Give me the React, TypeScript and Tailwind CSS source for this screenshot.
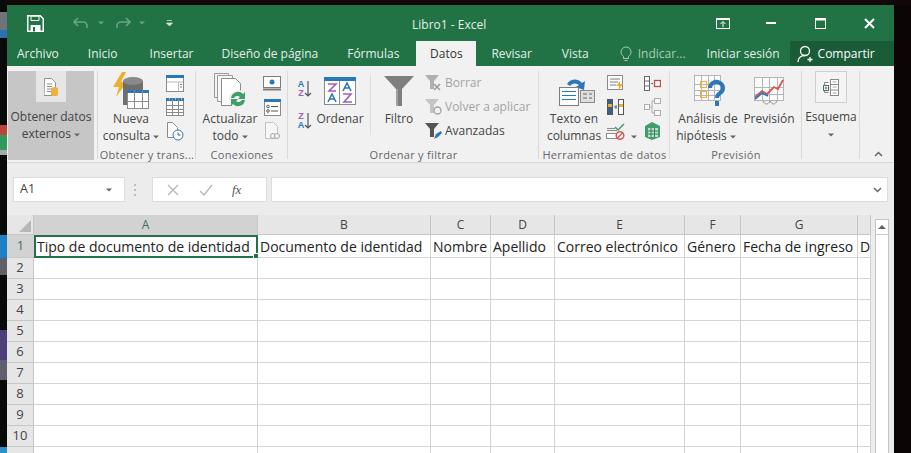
import type { ReactNode } from 'react'

// Excel "Datos" ribbon above an almost empty sheet

const Caret = ({ className = 'fill-[#666]' }: { className?: string }) => (
  <svg width="6" height="4" viewBox="0 0 6 4" className={`inline-block ${className}`}>
    <path d="M0 0.5h6L3 3.5z" />
  </svg>
)

// small table glyph used by many of the ribbon icons
const Tbl = ({ x, y, w, h, cols, rows, head = '#2b78b8', line = '#8a8a8a', fill = '#fff' }: {
  x: number; y: number; w: number; h: number; cols: number; rows: number; head?: string; line?: string; fill?: string
}) => (
  <g>
    <rect x={x + 0.5} y={y + 0.5} width={w - 1} height={h - 1} fill={fill} stroke={line} />
    {head !== 'none' && <rect x={x} y={y} width={w} height={3} fill={head} />}
    {Array.from({ length: cols - 1 }, (_, i) => {
      const cx = Math.round(x + ((i + 1) * w) / cols) + 0.5
      return <line key={i} x1={cx} x2={cx} y1={y} y2={y + h} stroke={line} />
    })}
    {Array.from({ length: rows - 1 }, (_, i) => {
      const cy = Math.round(y + 3 + ((i + 1) * (h - 3)) / rows) + 0.5
      return <line key={i} x1={x} x2={x + w} y1={cy} y2={cy} stroke={line} />
    })}
  </g>
)

const Doc = ({ x, y, w, h, stroke = '#8a8a8a' }: { x: number; y: number; w: number; h: number; stroke?: string }) => (
  <path
    d={`M${x + 0.5} ${y + 0.5}h${w - 6}l5 5v${h - 6}h-${w - 1}z`}
    fill="#fff"
    stroke={stroke}
  />
)

const ExternalIcon = () => (
  <svg width="14" height="18" viewBox="0 0 14 18">
    <path d="M0.5 0.5h7l4 4v13h-11.5z" fill="#fff" stroke="#8f8f8f" />
    <path d="M3 6h5M3 8.5h5M3 11h4M3 13.5h4" stroke="#8f8f8f" />
    <ellipse cx="10.5" cy="10.5" rx="3.5" ry="1.5" fill="#eeb23c" />
    <rect x="7" y="10.5" width="7" height="6" fill="#eeb23c" />
    <ellipse cx="10.5" cy="16.5" rx="3.5" ry="1.5" fill="#eeb23c" />
  </svg>
)

const QueryIcon = () => (
  <svg width="36" height="38" viewBox="0 0 36 38">
    <path d="M9 0L0 15h6L3 25l11-15H8l5-10z" fill="#eeb02f" />
    <path d="M10 9h20v24H10z" fill="#6f6f6f" />
    <ellipse cx="20" cy="9" rx="10" ry="4" fill="#8a8a8a" />
    <Tbl x={14} y={18} w={22} h={19} cols={3} rows={2} head="#2b78b8" />
  </svg>
)

const ConnTop = () => (
  <svg width="18" height="17" viewBox="0 0 18 17">
    <rect x="0.5" y="0.5" width="17" height="16" fill="#fff" stroke="#8a8a8a" />
    <rect x="0" y="0" width="18" height="3" fill="#2b78b8" />
    <path d="M1 7h16" stroke="#b9b9b9" />
    <path d="M12.5 7v9" stroke="#b9b9b9" />
    <path d="M14 9.5h2M14 12h2" stroke="#777" />
  </svg>
)

const ConnTable = () => (
  <svg width="18" height="18" viewBox="0 0 18 18">
    <Tbl x={0} y={0} w={18} h={18} cols={3} rows={4} head="#2b78b8" />
    <path d="M3 1h1M9 1h1M15 1h1" stroke="#fff" />
  </svg>
)

const RecentIcon = () => (
  <svg width="18" height="19" viewBox="0 0 18 19">
    <Doc x={1} y={0} w={11} h={16} />
    <circle cx="12" cy="13" r="5" fill="#fff" stroke="#2b78b8" />
    <path d="M12 10.5V13h2.5" fill="none" stroke="#555" />
  </svg>
)

const RefreshIcon = () => (
  <svg width="34" height="36" viewBox="0 0 34 36">
    <path d="M0.5 0.5h14v24h-14z" fill="#f4f4f4" stroke="#9a9a9a" />
    <path d="M3.5 2.5h15v26h-15z" fill="#f7f7f7" stroke="#9a9a9a" />
    <Doc x={7} y={5} w={20} h={28} stroke="#8a8a8a" />
    <circle cx="24" cy="26" r="9" fill="#f1f1f1" />
    <path d="M17 25a7 7 0 0 1 12-4l2-2v7h-7l2-2a4 4 0 0 0-6 1z" fill="#3f9d6e" />
    <path d="M31 27a7 7 0 0 1-12 4l-2 2v-7h7l-2 2a4 4 0 0 0 6-1z" fill="#3f9d6e" />
  </svg>
)

const MonitorIcon = () => (
  <svg width="18" height="15" viewBox="0 0 18 15">
    <rect x="0.5" y="0.5" width="17" height="11" fill="#fff" stroke="#7d7d7d" />
    <path d="M0 13.5h18" stroke="#7d7d7d" strokeWidth="2" />
    <circle cx="9" cy="6" r="2.5" fill="#2b78b8" />
  </svg>
)

const PropsIcon = () => (
  <svg width="17" height="17" viewBox="0 0 17 17">
    <rect x="0.5" y="0.5" width="16" height="16" fill="#fff" stroke="#8a8a8a" />
    <rect x="0" y="0" width="17" height="3" fill="#2b78b8" />
    <circle cx="4" cy="7.5" r="1.3" fill="none" stroke="#555" />
    <circle cx="4" cy="12" r="1.3" fill="none" stroke="#555" />
    <path d="M7 7.5h7M7 12h7" stroke="#555" />
  </svg>
)

const LinkDocIcon = () => (
  <svg width="15" height="18" viewBox="0 0 15 18">
    <path d="M0.5 0.5h8l4 4v12h-12z" fill="#f7f7f7" stroke="#c2c2c2" />
    <circle cx="8" cy="14" r="2.5" fill="#f1f1f1" stroke="#a9a9a9" />
    <circle cx="12" cy="14" r="2.5" fill="#f1f1f1" stroke="#a9a9a9" />
  </svg>
)

const SortSmall = ({ first, second, firstCls, secondCls }: { first: string; second: string; firstCls: string; secondCls: string }) => (
  <div className="flex items-center">
    <div className="flex flex-col items-center text-[9px] leading-[9px] font-semibold font-['Liberation_Sans',sans-serif]">
      <span className={`h-[9px] ${firstCls}`}>{first}</span>
      <span className={`h-[9px] ${secondCls}`}>{second}</span>
    </div>
    <svg width="8" height="18" viewBox="0 0 8 18">
      <path d="M4 1v15M1 13l3 3 3-3" fill="none" stroke="#555" strokeWidth="1.2" />
    </svg>
  </div>
)

const SortIcon = () => (
  <svg width="32" height="28" viewBox="0 0 32 28">
    <rect x="0.5" y="0.5" width="31" height="27" fill="#fff" stroke="#8a8a8a" />
    <rect x="0" y="0" width="32" height="4" fill="#2b78b8" />
    <path d="M15.5 4v24" stroke="#8a8a8a" />
    <path d="M4 7h8L5 14h7" fill="none" stroke="#a55fb5" strokeWidth="1.6" />
    <path d="M4 25l4-8 4 8M5.5 22h5" fill="none" stroke="#2b78b8" strokeWidth="1.6" />
    <path d="M19 14l4-8 4 8M20.5 11h5" fill="none" stroke="#2b78b8" strokeWidth="1.6" />
    <path d="M19 17h8l-7 8h8" fill="none" stroke="#a55fb5" strokeWidth="1.6" />
  </svg>
)

const FunnelIcon = () => (
  <svg width="30" height="30" viewBox="0 0 30 30">
    <path d="M0 0h30L18 13v17h-6V13z" fill="#7f7f7f" />
    <path d="M12 13h2v17h-2z" fill="#a0a0a0" />
  </svg>
)

const SmallFunnel = ({ fill = '#9a9a9a', children }: { fill?: string; children?: ReactNode }) => (
  <svg width="18" height="18" viewBox="0 0 18 18">
    <path d="M0 1h14L9 7v8H5V7z" fill={fill} />
    {children}
  </svg>
)

const TextColsIcon = () => (
  <svg width="36" height="30" viewBox="0 0 36 30">
    <path d="M8 8a9 9 0 0 1 15-1l3-2-1 9-8-3 3-2a6 6 0 0 0-9 1z" fill="#2b78b8" />
    <rect x="0.5" y="11.5" width="19" height="18" fill="#fff" stroke="#7d7d7d" />
    <path d="M3 15.5h14M3 19.5h14M3 23.5h14" stroke="#2b78b8" />
    <rect x="21.5" y="14.5" width="14" height="12" fill="#dfdfdf" stroke="#8a8a8a" />
    <path d="M24 18h4M30 18h3M24 22h4M30 22h3" stroke="#666" />
  </svg>
)

const FlashIcon = () => (
  <svg width="17" height="16" viewBox="0 0 17 16">
    <rect x="0.5" y="0.5" width="15" height="14" fill="#fff" stroke="#8a8a8a" />
    <path d="M3 4h10M3 7h8M3 10h6" stroke="#7d7d7d" />
    <path d="M13 6l-4 5h3l-1 5 5-7h-3z" fill="#eeb02f" />
  </svg>
)

const DupIcon = () => (
  <svg width="17" height="16" viewBox="0 0 17 16">
    <rect x="0.5" y="0.5" width="5" height="15" fill="#3d5f8c" stroke="#555" />
    <rect x="1" y="5" width="4" height="3" fill="#eeb02f" />
    <rect x="11.5" y="0.5" width="5" height="15" fill="#fff" stroke="#555" />
    <rect x="12" y="5" width="4" height="3" fill="#eeb02f" />
    <path d="M7 8h3M9 6v4" stroke="#2b78b8" />
  </svg>
)

const ValidateIcon = () => (
  <svg width="19" height="17" viewBox="0 0 19 17">
    <path d="M1 5.5h8M1 7.5h10" stroke="#8a8a8a" />
    <path d="M9 4l3 3 6-6" fill="none" stroke="#3f9d6e" strokeWidth="1.5" />
    <rect x="0.5" y="10.5" width="11" height="5" fill="#fff" stroke="#8a8a8a" />
    <circle cx="14" cy="12.5" r="3.8" fill="#fff" stroke="#d9534f" strokeWidth="1.5" />
    <path d="M11.5 15l5-5" stroke="#d9534f" strokeWidth="1.3" />
  </svg>
)

const ConsolidateIcon = () => (
  <svg width="17" height="15" viewBox="0 0 17 15">
    <rect x="0.5" y="0.5" width="5" height="14" fill="#fff" stroke="#666" />
    <path d="M1 5h4M1 10h4" stroke="#666" />
    <path d="M7 7.5h2" stroke="#2b78b8" />
    <rect x="10.5" y="4.5" width="6" height="6" fill="#fff" stroke="#c9483f" strokeWidth="1.3" />
  </svg>
)

const RelationsIcon = () => (
  <svg width="17" height="18" viewBox="0 0 17 18">
    <g fill="#f7f7f7" stroke="#adadad">
      <rect x="0.5" y="6.5" width="5" height="5" />
      <rect x="10.5" y="0.5" width="6" height="5" />
      <rect x="10.5" y="12.5" width="6" height="5" />
    </g>
    <path d="M6 9h2V3h2M8 9v6h2" fill="none" stroke="#adadad" />
  </svg>
)

const ModelIcon = () => (
  <svg width="17" height="18" viewBox="0 0 17 18">
    <path d="M1 4l7-4 8 4v11l-8 3-7-3z" fill="#3f9d6e" />
    <path d="M4 6h10v9H4z" fill="#bfe0cd" />
    <path d="M7 6v9M10.5 6v9M4 9h10M4 12h10" stroke="#2f7f56" />
  </svg>
)

const WhatIfIcon = () => (
  <svg width="32" height="32" viewBox="0 0 32 32">
    <Tbl x={0} y={0} w={27} h={26} cols={4} rows={4} head="none" line="#b5b5b5" fill="#fbfbfb" />
    <rect x="6.5" y="6.5" width="6" height="6" fill="none" stroke="#eeb02f" />
    <rect x="6.5" y="16.5" width="6" height="6" fill="none" stroke="#eeb02f" />
    <path d="M16 13a6.5 6 0 1 1 10 5c-2 1.500-3 2-3 5" fill="none" stroke="#2b78b8" strokeWidth="4" />
    <rect x="21" y="26" width="4" height="5" fill="#2b78b8" />
  </svg>
)

const ForecastIcon = () => (
  <svg width="31" height="28" viewBox="0 0 31 28">
    <Tbl x={0} y={0} w={30} h={24} cols={4} rows={3} head="none" line="#b5b5b5" fill="#fbfbfb" />
    <path d="M1 20l7-6 5 3 7-7 4 2 5-9" fill="none" stroke="#d9534f" strokeWidth="1.8" />
    <path d="M1 22l7-6 6 3" fill="none" stroke="#2b78b8" strokeWidth="1.8" />
    <path d="M9 24c2 4 5 4 7 0c2 4 5 4 7 0" fill="none" stroke="#8a8a8a" />
  </svg>
)

const OutlineIcon = () => (
  <svg width="16" height="17" viewBox="0 0 16 17">
    <path d="M5.500 3.500H1.500v10h4" fill="none" stroke="#8a8a8a" />
    <rect x="0.5" y="6.500" width="5" height="5" fill="#fff" stroke="#666" />
    <path d="M1.500 9h3M3 7.500v3" stroke="#3f9d6e" />
    <rect x="7.500" y="0.500" width="8" height="16" fill="#fff" stroke="#8a8a8a" />
    <path d="M8 5.500h7M8 11h7" stroke="#8a8a8a" />
    <path d="M9.500 3h4M9.500 8h4M9.500 14h4" stroke="#a5a5a5" />
  </svg>
)

// big button: icon slot above up to two text lines
const BigTool = ({ width, icon, lines }: { width: string; icon: ReactNode; lines: ReactNode[] }) => (
  <div className={`flex flex-col items-center shrink-0 ${width}`}>
    <div className="h-[44px] w-full flex items-center justify-center pt-[5px]">{icon}</div>
    {lines.map((line, i) => (
      <div key={i} className="h-[17px] leading-[17px] whitespace-nowrap">{line}</div>
    ))}
  </div>
)

const Stack = ({ className, items }: { className: string; items: ReactNode[] }) => (
  <div className={`flex flex-col pt-[5px] shrink-0 ${className}`}>
    {items.map((item, i) => (
      <div key={i} className="h-[24px] flex items-center justify-center">{item}</div>
    ))}
  </div>
)

const Group = ({ width, label, children }: { width: string; label?: string; children: ReactNode }) => (
  <div className={`relative flex flex-col shrink-0 h-full ${width}`}>
    <div className="flex h-[81px]">{children}</div>
    {label && (
      <div className="text-center text-[11px] leading-[15px] text-[#666] tracking-[0.3px] whitespace-nowrap">{label}</div>
    )}
    <div className="absolute right-0 top-[5px] bottom-[3px] w-px bg-[#d9d9d9]" />
  </div>
)

const TABS = [
  { name: 'Archivo', cls: 'ml-[10px]' },
  { name: 'Inicio', cls: 'ml-[29px]' },
  { name: 'Insertar', cls: 'ml-[32px]' },
  { name: 'Diseño de página', cls: 'ml-[28px]' },
  { name: 'Fórmulas', cls: 'ml-[29px]' },
]

const COLS = [
  { name: 'A', text: 'Tipo de documento de identidad' },
  { name: 'B', text: 'Documento de identidad' },
  { name: 'C', text: 'Nombre' },
  { name: 'D', text: 'Apellido' },
  { name: 'E', text: 'Correo electrónico' },
  { name: 'F', text: 'Género' },
  { name: 'G', text: 'Fecha de ingreso' },
  { name: '', text: 'D' },
]

const ROWS = [2, 3, 4, 5, 6, 7, 8, 9, 10]

const LEFT_STRIP = [
  { cls: 'h-[12px] bg-[#0a0a0a]' },
  { cls: 'h-[18px] bg-[#6f747b]' },
  { cls: 'h-[8px] bg-[#2f6fb5]' },
  { cls: 'h-[87px] bg-[#0a0a0a]' },
  { cls: 'h-[10px] bg-[#b8443a]' },
  { cls: 'h-[15px] bg-[#2f9a5a]' },
  { cls: 'h-[5px] bg-[#a9a9a9]' },
  { cls: 'h-[80px] bg-[#0a0a0a]' },
  { cls: 'h-[23px] bg-[#1f7fc4]' },
  { cls: 'h-[17px] bg-[#5d6166]' },
  { cls: 'h-[55px] bg-[#0a0a0a]' },
  { cls: 'h-[30px] bg-[#4f3f78]' },
  { cls: 'h-[20px] bg-[#5f5f70]' },
  { cls: 'h-[67px] bg-[#0a0a0a]' },
  { cls: 'h-[6px] bg-[#2b8fc9]' },
]

export default function App() {
  return (
    <div className="w-[911px] h-[453px] overflow-hidden bg-[#0b0506] flex flex-col font-['Open_Sans',sans-serif] text-[12px] text-[#444]">
      <div className="h-[5px] shrink-0 bg-[#120709]" />
      <div className="flex flex-1 min-h-0">
        <div className="w-[7px] shrink-0 flex flex-col -mt-[5px]">
          {LEFT_STRIP.map((s, i) => <div key={i} className={s.cls} />)}
        </div>

        <div className="w-[887px] shrink-0 flex flex-col bg-[#ececec] overflow-hidden">
          {/* Title bar */}
          <div className="h-[36px] shrink-0 bg-[#217346] flex items-center text-white relative">
            <svg width="17" height="17" viewBox="0 0 17 17" className="ml-[20px]">
              <path d="M0.750 0.750h12.500l3 3v12.500H0.750z" fill="none" stroke="#fff" strokeWidth="1.500" />
              <path d="M4 1h8v4.500H4z" fill="none" stroke="#fff" />
              <path d="M3.500 10h10v6.500h-10z" fill="#fff" />
              <path d="M6 12h2v4.500H6z" fill="#217346" />
            </svg>
            <svg width="16" height="12" viewBox="0 0 16 12" className="ml-[29px]">
              <path d="M5 1L1 5l4 4M1 5h9a4 4 0 0 1 4 4v2" fill="none" stroke="#6aa386" strokeWidth="1.600" />
            </svg>
            <Caret className="ml-[9px] fill-[#6aa386]" />
            <svg width="16" height="12" viewBox="0 0 16 12" className="ml-[11px]">
              <path d="M11 1l4 4-4 4M15 5H6a4 4 0 0 0-4 4v2" fill="none" stroke="#6aa386" strokeWidth="1.600" />
            </svg>
            <Caret className="ml-[8px] fill-[#6aa386]" />
            <svg width="7" height="8" viewBox="0 0 7 8" className="ml-[21px]">
              <path d="M1 1.500h5M0.500 4h6L3.500 7z" stroke="#cfe3d8" fill="#cfe3d8" strokeWidth="0.800" />
            </svg>
            <span className="absolute left-[405px] top-[11px] text-[12px] leading-[18px] text-[#e3efe8]">Libro1 - Excel</span>
            <div className="ml-auto flex items-center">
              <svg width="14" height="11" viewBox="0 0 14 11">
                <rect x="0.500" y="0.500" width="13" height="10" fill="none" stroke="#fff" />
                <path d="M1 1.500h12" stroke="#fff" />
                <path d="M7 9V4M4.500 6L7 3.500 9.500 6" fill="none" stroke="#fff" />
              </svg>
              <div className="ml-[36px] w-[10px] h-[2px] bg-white" />
              <svg width="11" height="11" viewBox="0 0 11 11" className="ml-[39px]">
                <rect x="0.500" y="0.500" width="10" height="10" fill="none" stroke="#fff" />
                <path d="M0 1.500h11" stroke="#fff" strokeWidth="2" />
              </svg>
              <svg width="11" height="11" viewBox="0 0 11 11" className="ml-[38px] mr-[19px]">
                <path d="M1 1l9 9M10 1l-9 9" stroke="#fff" strokeWidth="2" />
              </svg>
            </div>
          </div>

          {/* Tabs */}
          <div className="h-[25px] shrink-0 bg-[#217346] flex items-center text-[#e3efe8] whitespace-nowrap">
            {TABS.map(t => <span key={t.name} className={t.cls}>{t.name}</span>)}
            <div className="ml-[17px] w-[60px] h-full bg-[#f1f1f1] text-[#333] flex items-center justify-center">Datos</div>
            <span className="ml-[15px]">Revisar</span>
            <span className="ml-[30px]">Vista</span>
            <svg width="12" height="16" viewBox="0 0 12 16" className="ml-[31px]">
              <path d="M3.500 10.500C2 9 1 8 1 6a5 5 0 0 1 10 0c0 2-1 3-2.500 4.500v2h-5zM4.500 14.500h3" fill="none" stroke="#a9cbb7" />
            </svg>
            <span className="ml-[6px] text-[#a9cbb7]">Indicar...</span>
            <span className="ml-[21px]">Iniciar sesión</span>
            <div className="ml-[10px] flex-1 h-full bg-[#1a5c38] flex items-center text-white">
              <svg width="20" height="18" viewBox="0 0 20 18" className="ml-[7px]">
                <circle cx="8" cy="6" r="4.500" fill="none" stroke="#fff" strokeWidth="1.300" />
                <path d="M1 17c0-4 3-6.500 7-6.500M13 12v5M10.500 14.500h5" fill="none" stroke="#fff" strokeWidth="1.300" />
              </svg>
              <span className="ml-[1px]">Compartir</span>
            </div>
          </div>

          {/* Ribbon */}
          <div className="h-[97px] shrink-0 bg-[#f1f1f1] border-b border-[#d6d6d6] flex">
            <Group width="w-[91px]">
              <div className="ml-[1px] mt-[5px] w-[86px] h-[89px] bg-[#c6c6c6] flex flex-col items-center">
                <div className="w-[30px] h-[31px] bg-[#e6e6e6] flex items-center justify-center"><ExternalIcon /></div>
                <div className="mt-[6px] leading-[17px] whitespace-nowrap">Obtener datos</div>
                <div className="leading-[17px] whitespace-nowrap">externos <Caret /></div>
              </div>
            </Group>

            <Group width="w-[98px]" label="Obtener y trans...">
              <div className="ml-[4px]">
                <BigTool width="w-[58px]" icon={<QueryIcon />} lines={['Nueva', <>consulta <Caret /></>]} />
              </div>
              <Stack className="ml-[6px] w-[18px]" items={[<ConnTop />, <ConnTable />, <RecentIcon />]} />
            </Group>

            <Group width="w-[92px]" label="Conexiones">
              <div className="ml-[4px]">
                <BigTool width="w-[60px]" icon={<div className="pl-[2px]"><RefreshIcon /></div>} lines={['Actualizar', <>todo <Caret /></>]} />
              </div>
              <Stack className="ml-[3px] w-[18px]" items={[<MonitorIcon />, <PropsIcon />, <LinkDocIcon />]} />
            </Group>

            <Group width="w-[251px]" label="Ordenar y filtrar">
              <div className="ml-[7px] w-[20px] shrink-0 flex flex-col items-center pt-[14px] gap-[14px]">
                <SortSmall first="A" second="Z" firstCls="text-[#2b78b8]" secondCls="text-[#a55fb5]" />
                <SortSmall first="Z" second="A" firstCls="text-[#a55fb5]" secondCls="text-[#2b78b8]" />
              </div>
              <BigTool width="w-[50px]" icon={<SortIcon />} lines={['Ordenar']} />
              <div className="ml-[5px] mt-[9px] w-px h-[60px] bg-[#dcdcdc]" />
              <div className="ml-[10px]">
                <BigTool width="w-[36px]" icon={<FunnelIcon />} lines={['Filtro']} />
              </div>
              <div className="ml-[8px] flex flex-col pt-[5px] whitespace-nowrap">
                <div className="h-[24px] flex items-center gap-[2px] text-[#a3a3a3]">
                  <SmallFunnel fill="#b0b0b0"><path d="M9 10l6 6M15 10l-6 6" stroke="#9a9a9a" strokeWidth="1.500" /></SmallFunnel>
                  Borrar
                </div>
                <div className="h-[24px] flex items-center gap-[2px] text-[#a3a3a3]">
                  <SmallFunnel fill="#c4c4c4"><circle cx="12.500" cy="12.500" r="3.500" fill="none" stroke="#a0a0a0" strokeWidth="1.300" /></SmallFunnel>
                  Volver a aplicar
                </div>
                <div className="h-[24px] flex items-center gap-[2px]">
                  <SmallFunnel fill="#555"><path d="M9 17l2-5 5-3 1 2-4 4z" fill="#2b78b8" /></SmallFunnel>
                  Avanzadas
                </div>
              </div>
            </Group>

            <Group width="w-[131px]" label="Herramientas de datos">
              <div className="ml-[7px]">
                <BigTool width="w-[56px]" icon={<div className="pl-[5px]"><TextColsIcon /></div>} lines={['Texto en', 'columnas']} />
              </div>
              <Stack className="ml-[4px] w-[19px]" items={[<FlashIcon />, <DupIcon />, <ValidateIcon />]} />
              <div className="ml-[6px] pt-[61px]"><Caret /></div>
              <Stack className="ml-[6px] w-[19px]" items={[<ConsolidateIcon />, <RelationsIcon />, <ModelIcon />]} />
            </Group>

            <Group width="w-[132px]" label="Previsión">
              <div className="ml-[8px]">
                <BigTool width="w-[60px]" icon={<div className="pl-[3px]"><WhatIfIcon /></div>} lines={['Análisis de', <span className="-ml-[4px]">hipótesis <Caret /></span>]} />
              </div>
              <div className="ml-[5px]">
                <BigTool width="w-[52px]" icon={<ForecastIcon />} lines={['Previsión']} />
              </div>
            </Group>

            <Group width="w-[58px]">
              <div className="w-full mt-[5px] flex flex-col items-center">
                <div className="w-[32px] h-[32px] border border-[#d0d0d0] bg-[#f4f4f4] flex items-center justify-center"><OutlineIcon /></div>
                <div className="mt-[5px] leading-[17px]">Esquema</div>
                <div className="leading-[17px]"><Caret /></div>
              </div>
            </Group>

            <div className="flex-1 flex items-end justify-end pr-[11px] pb-[5px]">
              <svg width="9" height="6" viewBox="0 0 9 6">
                <path d="M1 5l3.500-3.500L8 5" fill="none" stroke="#666" strokeWidth="1.500" />
              </svg>
            </div>
          </div>

          {/* Formula bar */}
          <div className="h-[52px] pt-[1px] shrink-0 flex items-center text-[#444]">
            <div className="ml-[6px] w-[112px] h-[25px] bg-white border border-[#dcdcdc] flex items-center pl-[6px] pr-[12px] text-[12.500px]">
              A1
              <Caret className="ml-auto fill-[#666]" />
            </div>
            <svg width="4" height="12" viewBox="0 0 4 12" className="ml-[8px]">
              <path d="M2 0v2M2 5v2M2 10v2" stroke="#bdbdbd" strokeWidth="2" />
            </svg>
            <div className="ml-[15px] w-[115px] h-[25px] bg-white border border-[#dcdcdc] flex items-center">
              <svg width="12" height="12" viewBox="0 0 12 12" className="ml-[14px]">
                <path d="M1 1l10 10M11 1L1 11" stroke="#b5b5b5" strokeWidth="1.300" />
              </svg>
              <svg width="14" height="12" viewBox="0 0 14 12" className="ml-[20px]">
                <path d="M1 7l4 4 8-10" fill="none" stroke="#b5b5b5" strokeWidth="1.300" />
              </svg>
              <span className="ml-[19px] font-['Liberation_Serif',serif] italic text-[13px] text-[#555]">fx</span>
            </div>
            <div className="ml-[4px] w-[617px] h-[25px] bg-white border border-[#dcdcdc] flex items-center justify-end pr-[5px]">
              <svg width="9" height="6" viewBox="0 0 9 6">
                <path d="M1 1l3.500 3.500L8 1" fill="none" stroke="#666" strokeWidth="1.500" />
              </svg>
            </div>
          </div>

          {/* Sheet */}
          <div className="flex flex-1 min-h-0">
            <div className="w-[864px] shrink-0 grid grid-cols-[27px_224px_173px_60px_64px_130px_56px_117px_13px] grid-rows-[20px_23px_repeat(10,21px)] overflow-hidden bg-white">
              <div className="bg-[#e6e6e6] border-r border-b border-[#c6c6c6] flex items-end justify-end p-[2px]">
                <svg width="12" height="12" viewBox="0 0 12 12"><path d="M12 0v12H0z" fill="#b7b7b7" /></svg>
              </div>
              {COLS.map((c, i) => (
                <div
                  key={c.text}
                  className={`border-r border-[#c6c6c6] flex items-center justify-center ${i === 0 ? 'bg-[#d2d2d2] text-[#3f6f55]' : 'bg-[#e6e6e6] border-b'}`}
                >
                  {c.name}
                </div>
              ))}

              <div className="bg-[#d2d2d2] border-b border-[#c6c6c6] flex items-center justify-center text-[13px] text-[#3f6f55]">1</div>
              {COLS.map((c, i) => (
                <div
                  key={c.name + i}
                  className={`relative whitespace-nowrap text-[14px] text-[#222] flex items-center ${i === 0 ? 'border-2 border-[#217346] pl-[1px]' : 'overflow-hidden border-r border-b border-[#d4d4d4] pl-[2px]'}`}
                >
                  {c.text}
                  {i === 0 && <div className="absolute -right-[3px] -bottom-[3px] w-[6px] h-[6px] bg-[#217346] border border-white" />}
                </div>
              ))}

              {ROWS.map(r => (
                <div key={r} className="contents">
                  <div className="bg-[#e6e6e6] border-r border-b border-[#c6c6c6] flex items-center justify-center text-[13px]">{r}</div>
                  {COLS.map((c, i) => (
                    <div key={c.name + i} className="border-r border-b border-[#d4d4d4]" />
                  ))}
                </div>
              ))}
              {/* row 11 is cut off by the bottom of the picture */}
              <div className="bg-[#e6e6e6] border-r border-[#c6c6c6]" />
              {COLS.map((c, i) => (
                <div key={c.name + i} className="border-r border-[#d4d4d4]" />
              ))}
            </div>

            {/* Scrollbar */}
            <div className="ml-[4px] w-[14px] shrink-0 flex flex-col pt-[4px]">
              <div className="h-[16px] bg-white border border-[#c6c6c6] flex items-center justify-center">
                <svg width="8" height="4" viewBox="0 0 8 4"><path d="M4 0l4 4H0z" fill="#666" /></svg>
              </div>
              <div className="flex-1 bg-white border-x border-[#c6c6c6]" />
            </div>
          </div>
        </div>

        <div className="flex-1 bg-[#0b0506]" />
      </div>
    </div>
  )
}
